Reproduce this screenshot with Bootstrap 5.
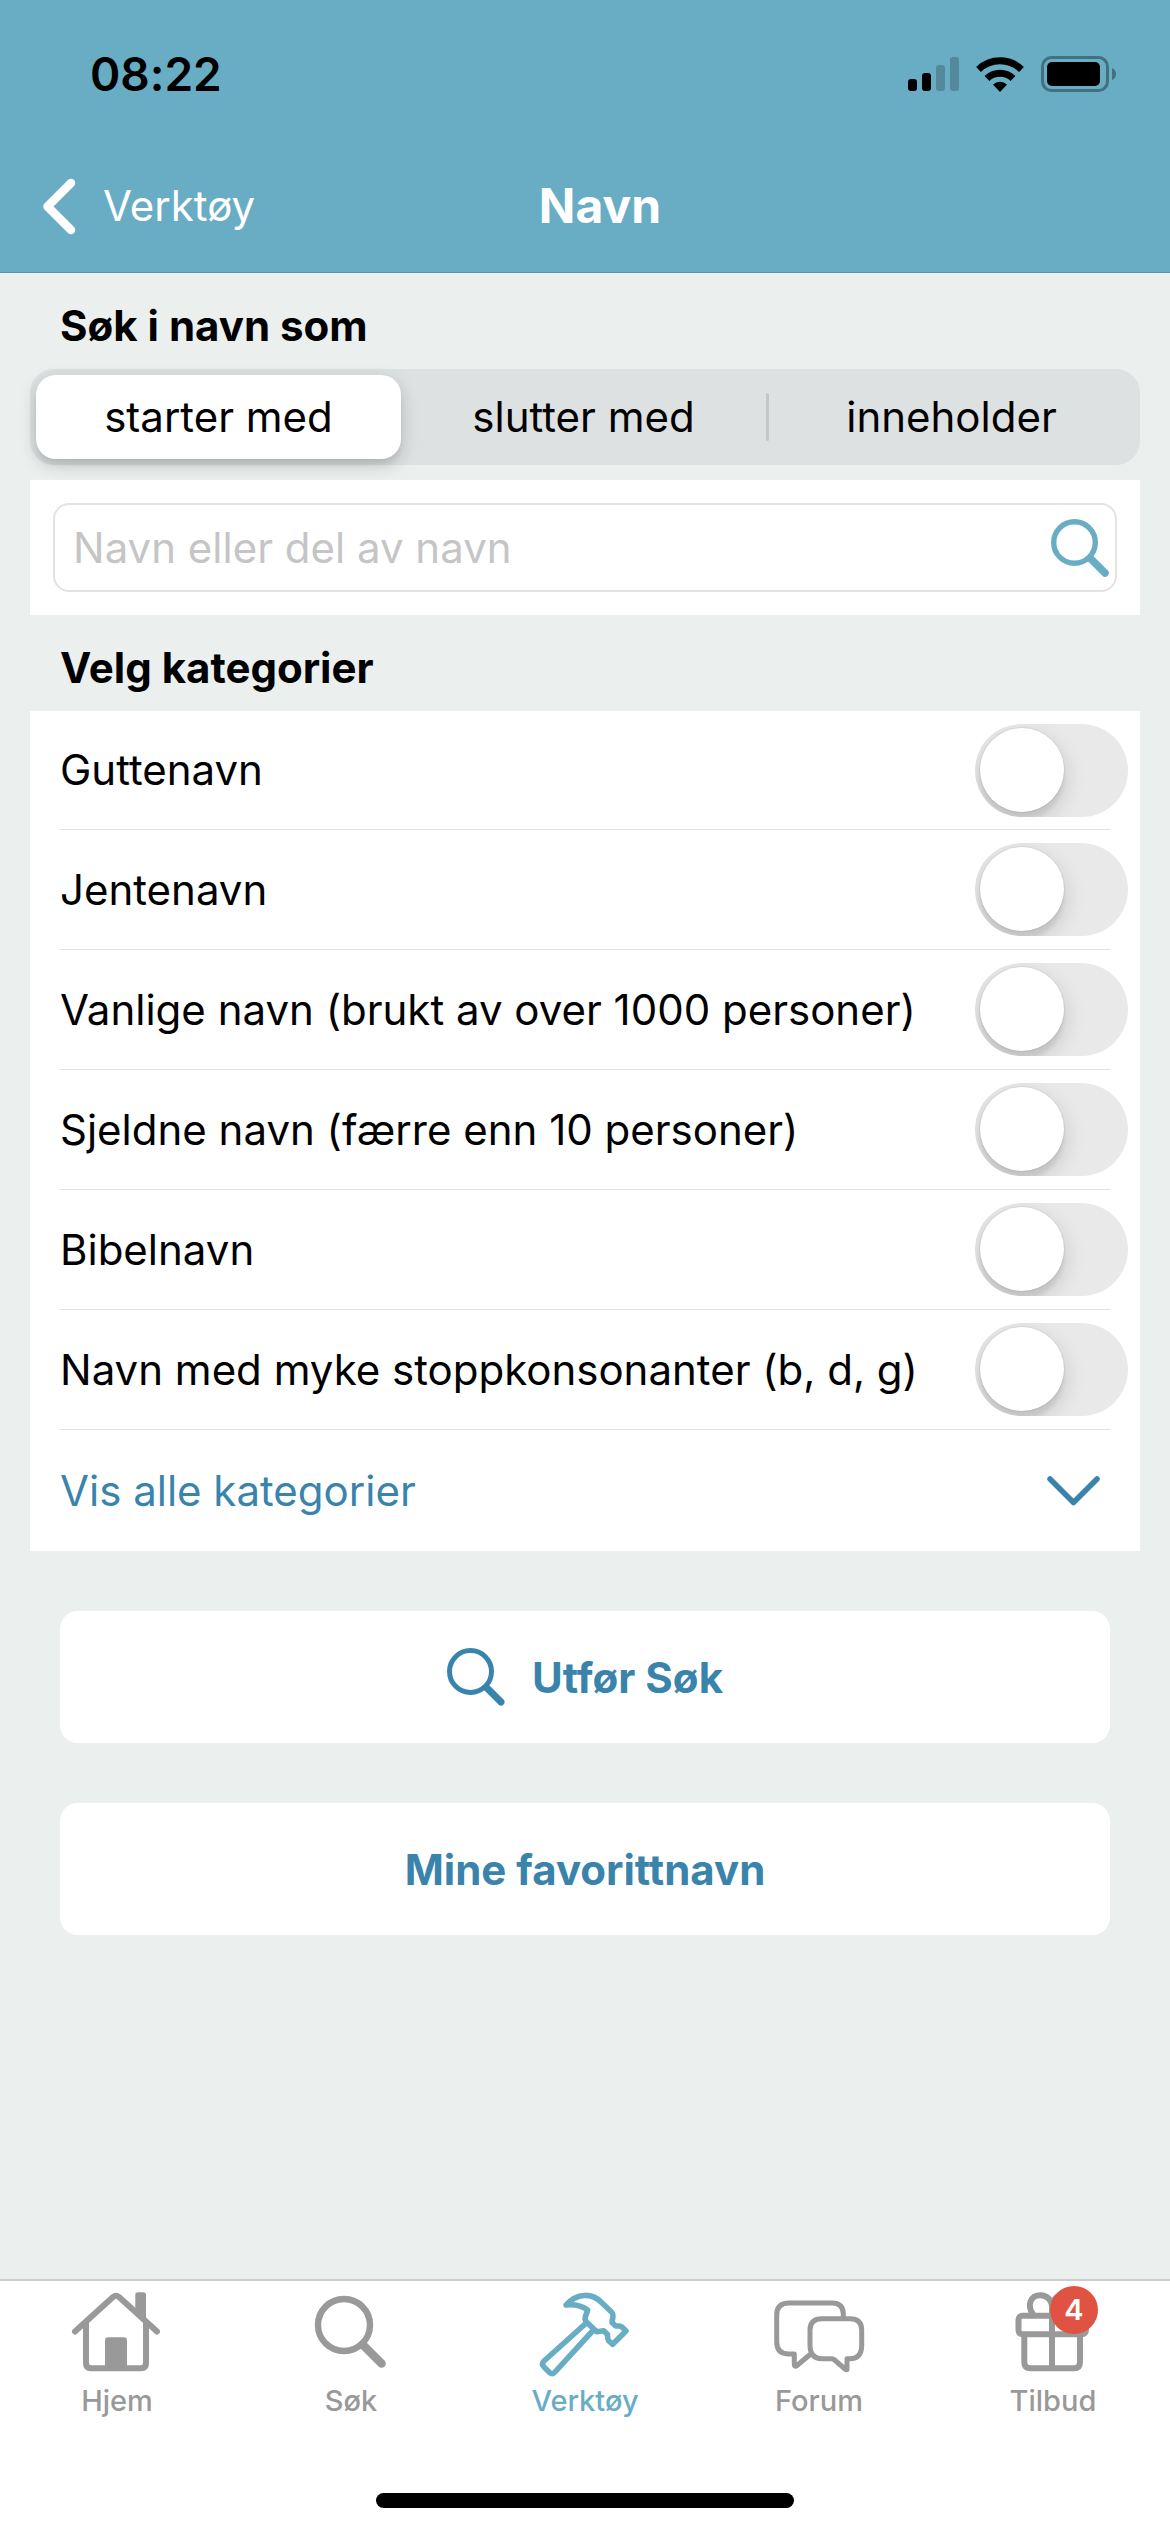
<!DOCTYPE html>
<html lang="no">
<head>
<meta charset="utf-8">
<meta name="viewport" content="width=device-width, initial-scale=1">
<title>Navn</title>
<link href="https://cdn.jsdelivr.net/npm/bootstrap@5.3.0/dist/css/bootstrap.min.css" rel="stylesheet">
<style>
  :root { --teal: #69adc4; --blue: #3a84ac; --page: #ebefee; --muted: #999; --line: #e3e3e3; }
  body { background: var(--page); color: #000; font-family: Inter, "Liberation Sans", sans-serif; font-size: 42px; line-height: 50px; font-variant-ligatures: none; }
  svg { display: block; flex: none; }
  .app-header { background: var(--teal); border-bottom: 1px solid #5a94a8; padding-bottom: 8px; }
  .status-bar { height: 148px; padding: 0 54px 0 90px; }
  .status-time { font-size: 46px; font-weight: 600; }
  .status-icons { gap: 17px; }
  .nav-row { height: 116px; padding: 0 12px 0 42px; }
  .nav-side { flex: 1 1 0; }
  .back-link { gap: 27px; }
  .page-title { font-size: 48px; line-height: 50px; font-weight: 700; }
  .content { padding: 0 30px; }
  .section-title { font-size: 42px; line-height: 50px; font-weight: 700; padding: 28px 30px 18px; }
  .segments { background: #dde1e2; border-radius: 24px; padding: 6px; }
  .segments .btn { flex: 1 1 0; height: 84px; border: 0; border-radius: 20px; padding: 0; font-size: 42px; line-height: 84px; color: #000; background: transparent; }
  .segments .btn-check:checked + .btn { background: #fff; color: #000; box-shadow: 0 6px 18px rgba(0,0,0,.18), 0 6px 4px rgba(0,0,0,.05); }
  .seg-rule { width: 3px; height: 48px; border-radius: 2px; background: #c3c7c8; }
  .panel { background: #fff; }
  .search-panel { position: relative; margin-top: 15px; padding: 23px; }
  .search-box { height: 89px; border: 2px solid #e3e3e3; border-radius: 16px; padding: 0 6px 0 18px; }
  .search-box input { border: 0; padding: 0; font-size: 42px; line-height: 50px; background: transparent; }
  .search-box input::placeholder { color: #c5c5c7; opacity: 1; }
  .cat-row { height: 120px; margin: 0 30px; border-bottom: 1px solid var(--line); }
  .cat-row:first-child { height: 119px; }
  .cat-row .form-switch { margin-right: -18px; }
  .cat-row .form-check-input { position: relative; overflow: hidden; width: 153px; height: 93px; margin: 0; border: 0; border-radius: 47px; background: #e9e9e9; }
  .cat-row .form-check-input::before { content: ""; position: absolute; left: 5px; top: 4px; width: 84px; height: 84px; border-radius: 50%; background: #fff; box-shadow: 0 0 0 1px rgba(0,0,0,.05), 0 8px 22px rgba(0,0,0,.16), 0 8px 4px rgba(0,0,0,.06); }
  .cat-row .form-check-input:checked { background: var(--teal); }
  .cat-row .form-check-input:checked::before { left: 64px; }
  .more-btn { height: 121px; padding: 0 40px 0 30px; font-size: 42px; color: var(--blue); border: 0; border-radius: 0; }
  .actions { padding: 60px 30px; gap: 60px; }
  .action-btn { height: 132px; border: 0; border-radius: 18px; background: #fff; color: var(--blue); font-size: 42px; font-weight: 700; gap: 27px; }
  .action-btn:hover, .more-btn:hover { background: #fff; color: var(--blue); }
  .tab-bar { background: #fff; border-top: 2px solid #cbcccc; padding: 7px 0 24px; }
  .tab-link { flex: 1 1 0; color: var(--muted); font-size: 29px; line-height: 36px; font-weight: 500; gap: 5px; }
  .tab-link.active { color: var(--teal); }
  .tab-count { position: absolute; left: 47px; top: -2px; width: 48px; height: 48px; border-radius: 50%; background: #e05242; color: #fff; font-size: 29px; line-height: 48px; font-weight: 600; text-align: center; }
  .home-bar { width: 418px; height: 15px; border-radius: 8px; background: #000; margin: 74px auto 0; }
</style>
<script src="https://cdn.jsdelivr.net/npm/bootstrap@5.3.0/dist/js/bootstrap.bundle.min.js"></script>
</head>
<body class="min-vh-100 d-flex flex-column">

<header class="app-header">
  <div class="status-bar d-flex align-items-center justify-content-between">
    <span class="status-time">08:22</span>
    <div class="status-icons d-flex align-items-center">
      <svg width="51" height="34" viewBox="0 0 51 34" aria-hidden="true">
        <rect x="0" y="22" width="9" height="12" rx="3"/><rect x="14" y="16" width="9" height="18" rx="3"/>
        <g fill="#54889b"><rect x="28" y="8" width="9" height="26" rx="3"/><rect x="42" y="0" width="9" height="34" rx="3"/></g>
      </svg>
      <svg width="48" height="36" viewBox="0 0 48 36" aria-hidden="true">
        <g fill="none" stroke="#000" stroke-width="7"><path d="M2.500 13.500A31 31 0 0 1 45.500 13.500"/><path d="M11 22.500A19 19 0 0 1 37 22.500"/></g>
        <path d="M24 36L17 28.500A10.500 10.500 0 0 1 31 28.500Z"/>
      </svg>
      <svg width="75" height="36" viewBox="0 0 75 36" aria-hidden="true">
        <rect x="1.500" y="1.500" width="65" height="33" rx="9" fill="none" stroke="#41707f" stroke-width="3"/>
        <rect x="6" y="6" width="53" height="24" rx="5"/><path d="M71 12q4 2 4 6t-4 6z" fill="#41707f"/>
      </svg>
    </div>
  </div>
  <nav class="nav-row d-flex align-items-center text-white">
    <div class="nav-side d-flex">
      <a href="#" class="back-link d-flex align-items-center text-white text-decoration-none">
        <svg width="34" height="57" viewBox="0 0 34 57" fill="none" stroke="currentColor" stroke-width="8.500" stroke-linecap="round" stroke-linejoin="round" aria-hidden="true"><path d="M29 5L5.500 28.500L29 52"/></svg>
        Verktøy
      </a>
    </div>
    <h1 class="page-title m-0">Navn</h1>
    <div class="nav-side"></div>
  </nav>
</header>

<main class="content">
  <h2 class="section-title m-0">Søk i navn som</h2>
  <div class="segments d-flex align-items-center" role="group" aria-label="Søk i navn som">
    <input type="radio" class="btn-check" name="modus" id="modus1" checked>
    <label class="btn" for="modus1">starter med</label>
    <input type="radio" class="btn-check" name="modus" id="modus2">
    <label class="btn" for="modus2">slutter med</label>
    <span class="seg-rule"></span>
    <input type="radio" class="btn-check" name="modus" id="modus3">
    <label class="btn" for="modus3">inneholder</label>
  </div>

  <div class="panel search-panel">
    <div class="search-box d-flex align-items-center">
      <input type="text" class="form-control shadow-none" placeholder="Navn eller del av navn" aria-label="Navn eller del av navn">
      <button type="button" class="btn p-0 border-0" aria-label="Søk">
        <svg width="58" height="58" viewBox="0 0 58 58" fill="none" stroke="#69adc4" stroke-linecap="round" aria-hidden="true"><circle cx="23.500" cy="23.500" r="20.800" stroke-width="5.400"/><path d="M39.500 39.500L54 54" stroke-width="7.500"/></svg>
      </button>
    </div>
  </div>

  <h2 class="section-title m-0">Velg kategorier</h2>
  <div class="panel">
    <div class="cat-row d-flex align-items-center justify-content-between">
      <label for="kat1">Guttenavn</label>
      <div class="form-switch p-0 d-flex"><input class="form-check-input" type="checkbox" role="switch" id="kat1"></div>
    </div>
    <div class="cat-row d-flex align-items-center justify-content-between">
      <label for="kat2">Jentenavn</label>
      <div class="form-switch p-0 d-flex"><input class="form-check-input" type="checkbox" role="switch" id="kat2"></div>
    </div>
    <div class="cat-row d-flex align-items-center justify-content-between">
      <label for="kat3">Vanlige navn (brukt av over 1000 personer)</label>
      <div class="form-switch p-0 d-flex"><input class="form-check-input" type="checkbox" role="switch" id="kat3"></div>
    </div>
    <div class="cat-row d-flex align-items-center justify-content-between">
      <label for="kat4">Sjeldne navn (færre enn 10 personer)</label>
      <div class="form-switch p-0 d-flex"><input class="form-check-input" type="checkbox" role="switch" id="kat4"></div>
    </div>
    <div class="cat-row d-flex align-items-center justify-content-between">
      <label for="kat5">Bibelnavn</label>
      <div class="form-switch p-0 d-flex"><input class="form-check-input" type="checkbox" role="switch" id="kat5"></div>
    </div>
    <div class="cat-row d-flex align-items-center justify-content-between">
      <label for="kat6">Navn med myke stoppkonsonanter (b, d, g)</label>
      <div class="form-switch p-0 d-flex"><input class="form-check-input" type="checkbox" role="switch" id="kat6"></div>
    </div>
    <button type="button" class="more-btn btn w-100 d-flex align-items-center justify-content-between">
      Vis alle kategorier
      <svg width="53" height="30" viewBox="0 0 53 30" fill="none" stroke="currentColor" stroke-width="5.500" stroke-linecap="round" stroke-linejoin="round" aria-hidden="true"><path d="M3 3L26.500 26.500L50 3"/></svg>
    </button>
  </div>

  <div class="actions d-flex flex-column">
    <button type="button" class="action-btn btn d-flex align-items-center justify-content-center">
      <svg width="58" height="58" viewBox="0 0 58 58" fill="none" stroke="currentColor" stroke-linecap="round" aria-hidden="true"><circle cx="23.500" cy="23.500" r="21" stroke-width="5"/><path d="M39.500 39.500L54 54" stroke-width="7"/></svg>
      Utfør Søk
    </button>
    <button type="button" class="action-btn btn">Mine favorittnavn</button>
  </div>
</main>

<footer class="tab-bar mt-auto">
  <nav class="d-flex">
    <a href="#" class="tab-link d-flex flex-column align-items-center text-decoration-none">
      <svg width="100" height="90" viewBox="0 0 100 90" fill="none" stroke="currentColor" stroke-width="6" stroke-linecap="round" stroke-linejoin="round" aria-hidden="true">
        <path d="M8 43.500L46 9Q49 6.500 52 9L90 43.500"/><path d="M19 34V75Q19 80.300 24 80.300H74Q79 80.300 79 75V34"/>
        <path d="M38 80V52.500Q38 49.300 41 49.300H57Q60 49.300 60 52.500V80Z" fill="currentColor" stroke="none"/>
        <path d="M68.300 27V7Q68.300 4.300 71 4.300H76.300Q79 4.300 79 7V36Z" fill="currentColor" stroke="none"/>
      </svg>
      Hjem
    </a>
    <a href="#" class="tab-link d-flex flex-column align-items-center text-decoration-none">
      <svg width="100" height="90" viewBox="0 0 100 90" fill="none" stroke="currentColor" stroke-linecap="round" aria-hidden="true"><circle cx="43" cy="37" r="26" stroke-width="6.400"/><path d="M62.500 57.500L80.500 75.500" stroke-width="8.500"/></svg>
      Søk
    </a>
    <a href="#" class="tab-link active d-flex flex-column align-items-center text-decoration-none" aria-current="page">
      <svg width="100" height="90" viewBox="0 0 100 90" fill="none" stroke="currentColor" stroke-width="5.600" stroke-linecap="round" stroke-linejoin="round" aria-hidden="true">
        <path d="M31 17C42 4.500 57 5 66 14L76.500 24Q78.300 26 78 28L77 34.500L80.700 38H84Q86 38 87.500 39.500L91 43L77.700 56.300L73.500 52.500Q72.700 51.500 72.500 46.500L68.700 42.700L61.700 43.700L51.500 34Q49.500 32 50.300 29L52.700 22C46 17 40 16 31 17Z"/>
        <path d="M50.700 35.500L9 73Q6 76 9 79L14.500 84.500Q17.300 87 20 84L57.500 43"/>
      </svg>
      Verktøy
    </a>
    <a href="#" class="tab-link d-flex flex-column align-items-center text-decoration-none">
      <svg width="100" height="90" viewBox="0 0 100 90" fill="none" stroke="currentColor" stroke-width="5" stroke-linecap="round" stroke-linejoin="round" aria-hidden="true">
        <path d="M74.300 29V26Q74.300 15 63 15H20Q7.700 15 7.700 27V54Q7.700 66 20 66H25.300V76Q25.300 79.500 28 77.500L40.500 67"/>
        <path d="M53 30.700H81Q92.700 30.700 92.700 42V57Q92.700 70.700 81 70.700H78V81Q78 82.500 76 81L65 71.500Q64 70.700 62 70.700H53Q41 70.700 41 57V42Q41 30.700 53 30.700Z"/>
      </svg>
      Forum
    </a>
    <a href="#" class="tab-link d-flex flex-column align-items-center text-decoration-none">
      <span class="position-relative">
        <svg width="100" height="90" viewBox="0 0 100 90" fill="none" stroke="currentColor" stroke-width="6" aria-hidden="true">
          <rect x="15.500" y="27.700" width="67.500" height="18.600" rx="4"/>
          <path d="M21.300 46V74Q21.300 80.300 27.500 80.300H71Q77 80.300 77 74V46M49 27V80M30.500 27C23 17 28 7.300 37.300 7.300C45 7.300 49 13 49 19V27M67.500 27C75 17 70 7.300 60.700 7.300C53 7.300 49 13 49 19"/>
        </svg>
        <span class="tab-count">4</span>
      </span>
      Tilbud
    </a>
  </nav>
  <div class="home-bar"></div>
</footer>

</body>
</html>
